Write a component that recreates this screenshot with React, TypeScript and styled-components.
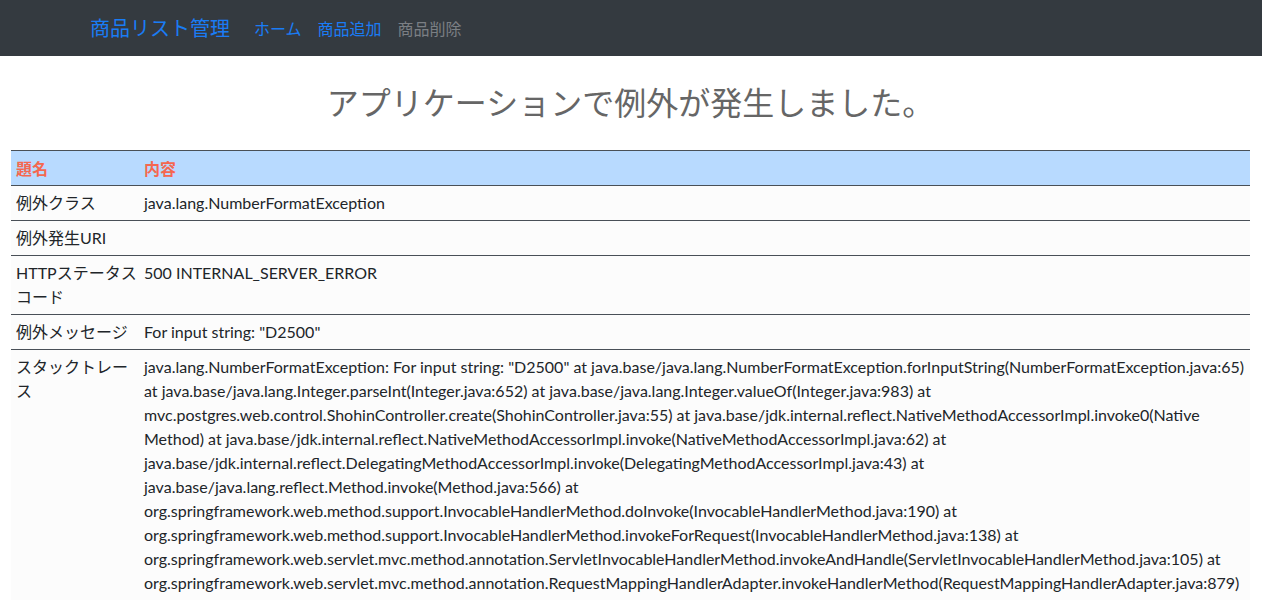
import React from 'react';
import styled, { createGlobalStyle } from 'styled-components';

const GlobalStyle = createGlobalStyle`
  body {
    margin: 0;
    background: #ffffff;
    color: #212529;
    font-family: Lato, "Noto Sans CJK JP", sans-serif;
    font-size: 16px;
    line-height: 24px;
  }
`;

type Row = {
  label: string;
  value: string[];
};

const traceLines = [
  'java.lang.NumberFormatException: For input string: "D2500" at java.base/java.lang.NumberFormatException.forInputString(NumberFormatException.java:65)',
  'at java.base/java.lang.Integer.parseInt(Integer.java:652) at java.base/java.lang.Integer.valueOf(Integer.java:983) at',
  'mvc.postgres.web.control.ShohinController.create(ShohinController.java:55) at java.base/jdk.internal.reflect.NativeMethodAccessorImpl.invoke0(Native',
  'Method) at java.base/jdk.internal.reflect.NativeMethodAccessorImpl.invoke(NativeMethodAccessorImpl.java:62) at',
  'java.base/jdk.internal.reflect.DelegatingMethodAccessorImpl.invoke(DelegatingMethodAccessorImpl.java:43) at',
  'java.base/java.lang.reflect.Method.invoke(Method.java:566) at',
  'org.springframework.web.method.support.InvocableHandlerMethod.doInvoke(InvocableHandlerMethod.java:190) at',
  'org.springframework.web.method.support.InvocableHandlerMethod.invokeForRequest(InvocableHandlerMethod.java:138) at',
  'org.springframework.web.servlet.mvc.method.annotation.ServletInvocableHandlerMethod.invokeAndHandle(ServletInvocableHandlerMethod.java:105) at',
  'org.springframework.web.servlet.mvc.method.annotation.RequestMappingHandlerAdapter.invokeHandlerMethod(RequestMappingHandlerAdapter.java:879)',
  'at org.springframework.web.servlet.mvc.method.AbstractHandlerMethodAdapter.handle(AbstractHandlerMethodAdapter.java:87) at',
];

const rows: Row[] = [
  { label: '例外クラス', value: ['java.lang.NumberFormatException'] },
  { label: '例外発生URI', value: [] },
  { label: 'HTTPステータスコード', value: ['500 INTERNAL_SERVER_ERROR'] },
  { label: '例外メッセージ', value: ['For input string: "D2500"'] },
  { label: 'スタックトレース', value: traceLines },
];

const navLinks = [
  { text: 'ホーム', disabled: false },
  { text: '商品追加', disabled: false },
  { text: '商品削除', disabled: true },
];

export default function App() {
  return (
    <>
      <GlobalStyle />
      <NavBar>
        <Brand>商品リスト管理</Brand>
        <NavList>
          {navLinks.map((link) => (
            <NavLink key={link.text} $disabled={link.disabled}>
              {link.text}
            </NavLink>
          ))}
        </NavList>
      </NavBar>
      <Main>
        <Title>アプリケーションで例外が発生しました。</Title>
        <Table>
          <colgroup>
            <LabelCol />
            <col />
          </colgroup>
          <thead>
            <tr>
              <HeadCell>題名</HeadCell>
              <HeadCell>内容</HeadCell>
            </tr>
          </thead>
          <tbody>
            {rows.map((row) => (
              <tr key={row.label}>
                <BodyCell $label>{row.label}</BodyCell>
                <BodyCell>
                  {row.value.map((line, i) => (
                    <Line key={i}>{line}</Line>
                  ))}
                </BodyCell>
              </tr>
            ))}
          </tbody>
        </Table>
      </Main>
    </>
  );
}

const NavBar = styled.nav`
  display: flex;
  align-items: center;
  height: 56px;
  padding-left: 90px;
  background: #343a40;
  font-family: "Noto Sans CJK JP", sans-serif;
`;

const Brand = styled.a`
  font-size: 20px;
  line-height: 30px;
  color: #1a7cf5;
  margin-right: 16px;
`;

const NavList = styled.div`
  display: flex;
  align-items: center;
`;

const NavLink = styled.a<{ $disabled: boolean }>`
  padding: 0 8px;
  font-size: 16px;
  color: ${(p) => (p.$disabled ? '#7b7f84' : '#1a7cf5')};
`;

const Main = styled.main`
  padding: 0 12px 0 11px;
`;

const Title = styled.h2`
  margin: 0;
  padding: 26px 0 30px;
  text-align: center;
  font-family: "Noto Sans CJK JP", sans-serif;
  font-size: 32px;
  line-height: 38px;
  font-weight: 400;
  color: #666666;
`;

const Table = styled.table`
  width: 100%;
  table-layout: fixed;
  border-collapse: collapse;
  border-top: 1px solid #495057;
`;

const LabelCol = styled.col`
  width: 128px;
`;

const HeadCell = styled.th`
  background: #b8daff;
  color: #f5674f;
  font-family: "Noto Sans CJK JP", sans-serif;
  font-weight: 700;
  text-align: left;
  padding: 5px 5px;
  border-bottom: 1px solid #495057;
`;

const BodyCell = styled.td<{ $label?: boolean }>`
  vertical-align: top;
  padding: ${(p) => (p.$label ? '5px 0 5px 5px' : '5px 5px')};
  background: #fcfcfc;
  border-bottom: 1px solid #495057;
`;

const Line = styled.div`
  white-space: nowrap;
`;
